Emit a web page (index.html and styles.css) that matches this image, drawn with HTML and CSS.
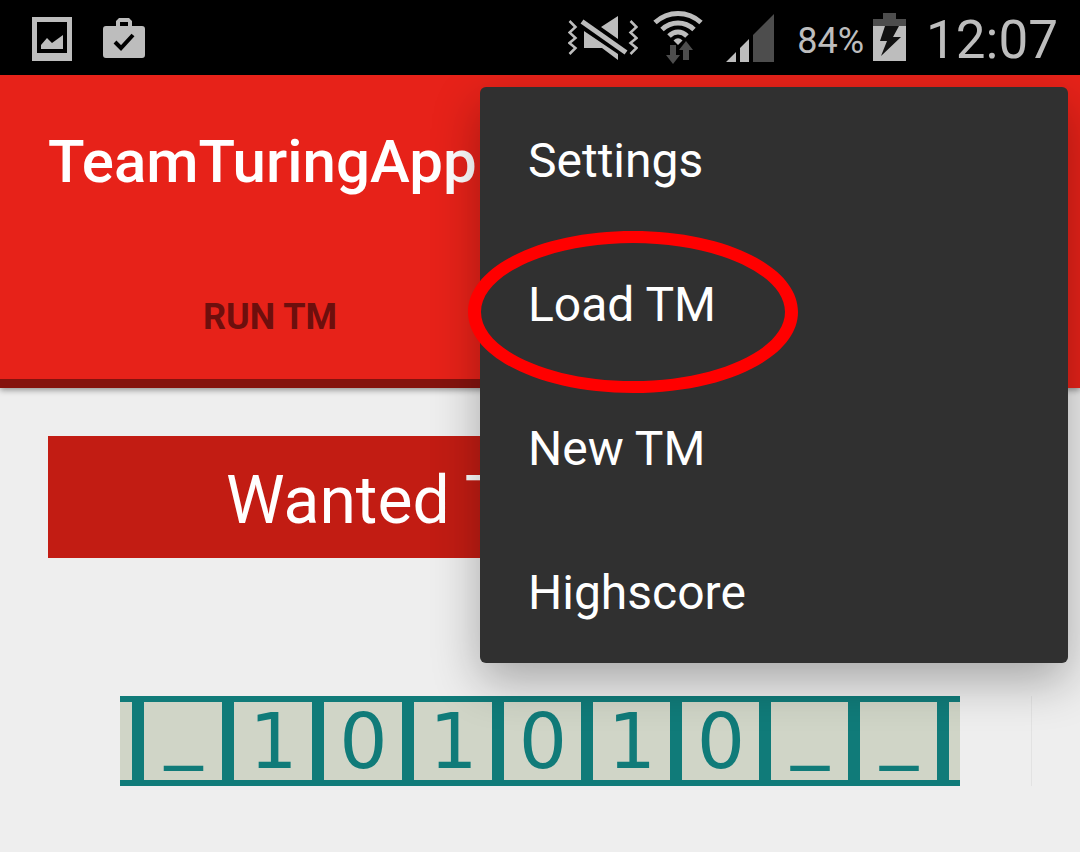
FILE: index.html
```html
<!DOCTYPE html>
<html lang="en">
<head>
<meta charset="utf-8">
<meta name="viewport" content="width=device-width, initial-scale=1">
<title>TeamTuringApp</title>
<link rel="stylesheet" href="styles.css">
</head>
<body>
<div class="status">
  <div class="status-group status-left">
    <svg class="icon" width="40" height="75" viewBox="32 0 40 75" aria-hidden="true">
      <path fill="#bdbdbd" fill-rule="evenodd" d="M32 17H72V61H32ZM37 22V53H67V22Z"/>
      <path fill="#bdbdbd" d="M41 49V45L47 38L52 43L63 35V49Z"/>
    </svg>
    <svg class="icon" width="42" height="75" viewBox="103 0 42 75" aria-hidden="true">
      <path fill="#bdbdbd" fill-rule="evenodd" d="M116 26V21L119 18H129L132 21V26H142Q145 26 145 29V55Q145 58 142 58H106Q103 58 103 55V29Q103 26 106 26ZM120 22V26H128V22Z"/>
      <path d="M115 42L121 48L133 35" fill="none" stroke="#000" stroke-width="4"/>
    </svg>
  </div>
  <div class="status-group status-right">
    <svg class="icon" width="70" height="75" viewBox="568 0 70 75" aria-hidden="true">
      <path fill="#bdbdbd" d="M618 16V39L601 27ZM584 31L618 54V60L602 48H584Z"/>
      <path d="M582 21.500L626 52.500" stroke="#bdbdbd" stroke-width="5"/>
      <path d="M569.500 21L575.500 27L569.500 32.500L575.500 38L569.500 43L575.500 48L569.500 54M630.500 21L636.500 27L630.500 32.500L636.500 38L630.500 43L636.500 48L630.500 54" fill="none" stroke="#bdbdbd" stroke-width="2.500"/>
    </svg>
    <svg class="icon icon-wifi" width="50" height="75" viewBox="653 0 50 75" aria-hidden="true">
      <g fill="none" stroke="#bdbdbd" stroke-width="5">
        <path d="M655 22.500Q665 13.500 678 13.500Q691 13.500 701 22.500"/>
        <path d="M662 29.500Q669 23 678 23Q687 23 694 29.500"/>
        <path d="M669 36Q673 32 678 32Q683 32 687 36"/>
      </g>
      <path fill="#bdbdbd" d="M673.500 40.500Q678 36 682.500 40.500L678 45Z"/>
      <path fill="#4d4d4d" d="M670 45H676V55H680L673 64L666 55H670ZM683 60V50H679L686 41L693 50H689V60Z"/>
    </svg>
    <svg class="icon icon-signal" width="48" height="75" viewBox="726 0 48 75" aria-hidden="true">
      <path fill="#bdbdbd" d="M726 62L736 52V62ZM740 62V48L749 39V62Z"/>
      <path fill="#4d4d4d" d="M753 62V35L774 14V62Z"/>
    </svg>
    <span class="battery-level">84%</span>
    <svg class="icon icon-battery" width="33" height="75" viewBox="873 0 33 75" aria-hidden="true">
      <path fill="#bdbdbd" d="M873 26H906V61H873Z"/>
      <path fill="#4d4d4d" d="M873 19H883V13H896V19H906V26H873Z"/>
      <path fill="#111" d="M885 26H899L893 37H901L881 56L887 41H880Z"/>
    </svg>
    <time class="clock">12:07</time>
  </div>
</div>
<header class="app-bar">
  <h1 class="title">TeamTuringApp</h1>
  <nav class="tabs">
    <button class="tab" type="button">RUN TM</button>
  </nav>
  <div class="menu" role="menu">
    <button class="menu-item" type="button" role="menuitem">Settings</button>
    <button class="menu-item" type="button" role="menuitem">Load TM
      <svg class="highlight" width="330" height="162" viewBox="0 0 330 162" aria-hidden="true">
        <path fill="#f00" fill-rule="evenodd" d="M0 81C0 36 72 0 165 0S330 36 330 81S258 162 165 162S0 126 0 81ZM13 81C13 119 83 150 165 150S317 119 317 81S247 12 165 12S13 43 13 81Z"/>
      </svg>
    </button>
    <button class="menu-item" type="button" role="menuitem">New TM</button>
    <button class="menu-item" type="button" role="menuitem">Highscore</button>
  </div>
</header>
<main class="content">
  <h2 class="banner">Wanted T</h2>
  <div class="tape-row">
    <div class="tape">
      <span class="edge"></span>
      <span class="cell blank">_</span>
      <span class="cell">1</span>
      <span class="cell">0</span>
      <span class="cell">1</span>
      <span class="cell">0</span>
      <span class="cell">1</span>
      <span class="cell">0</span>
      <span class="cell blank">_</span>
      <span class="cell blank">_</span>
      <span class="edge edge-end"></span>
    </div>
  </div>
</main>
</body>
</html>
```
FILE: styles.css
```css
* {
  box-sizing: border-box;
}

body {
  margin: 0;
  min-height: 100vh;
  overflow-x: hidden;
  background: #eee;
  font-family: Roboto, "Liberation Sans", sans-serif;
}

button {
  margin: 0;
  border: 0;
  background: none;
  font-family: inherit;
}

.status {
  position: relative;
  z-index: 2;
  display: flex;
  justify-content: space-between;
  height: 75px;
  padding: 0 22px 0 32px;
  background: #000;
  color: #bdbdbd;
}

.status-group {
  display: flex;
  align-items: center;
}

.status-left {
  gap: 31px;
}

.icon {
  display: block;
  flex: none;
}

.icon-wifi {
  margin-left: 15px;
}

.icon-signal {
  margin: 0 23px;
}

.battery-level {
  padding-top: 8px;
  font-size: 36px;
  line-height: 75px;
}

.icon-battery {
  margin: 0 20px 0 9px;
}

.clock {
  padding-top: 6px;
  font-size: 53px;
  font-weight: 400;
  line-height: 75px;
}

.app-bar {
  position: relative;
  z-index: 1;
  background: #e72219;
  box-shadow: 0 2px 6px rgba(0, 0, 0, 0.4);
}

.title {
  margin: 0;
  padding: 2px 48px 0;
  color: #fff;
  font-size: 60px;
  font-weight: 500;
  line-height: 170px;
}

.tabs {
  display: grid;
  grid-template-columns: 1fr 1fr;
}

.tab {
  padding: 10px 0 2px;
  border-bottom: 9px solid #85130e;
  color: #6d0f0d;
  font-size: 36px;
  font-weight: 700;
  line-height: 120px;
}

.menu {
  position: absolute;
  top: 12px;
  right: 12px;
  width: 588px;
  border-radius: 6px;
  background: #303030;
  box-shadow: 0 18px 48px rgba(0, 0, 0, 0.3);
}

.menu-item {
  position: relative;
  display: block;
  width: 100%;
  padding: 4px 48px 0;
  color: #fff;
  font-size: 48px;
  line-height: 140px;
  text-align: left;
}

.highlight {
  position: absolute;
  top: 0;
  left: -12px;
}

.content {
  padding: 48px;
}

.banner {
  margin: 0;
  padding: 8px 178px 0;
  background: #c21c13;
  color: #fff;
  font-size: 66px;
  font-weight: 400;
  line-height: 114px;
}

.tape-row {
  margin-top: 138px;
  padding: 0 71px 0 72px;
  border-right: 1px solid #e2e2e2;
}

.tape {
  display: grid;
  grid-template-columns: 12px repeat(4, 90fr) repeat(5, 89fr) 23px;
  height: 90px;
  border: solid #107b79;
  border-width: 6px 0;
  background: #d0d5c7;
  color: #107b79;
  font-family: "DejaVu Sans", sans-serif;
  font-size: 76px;
  line-height: 80px;
  text-align: center;
}

.cell,
.edge-end {
  border-left: 12px solid #107b79;
}

.cell {
  padding-left: 1px;
}

.blank {
  line-height: 50px;
}
```
